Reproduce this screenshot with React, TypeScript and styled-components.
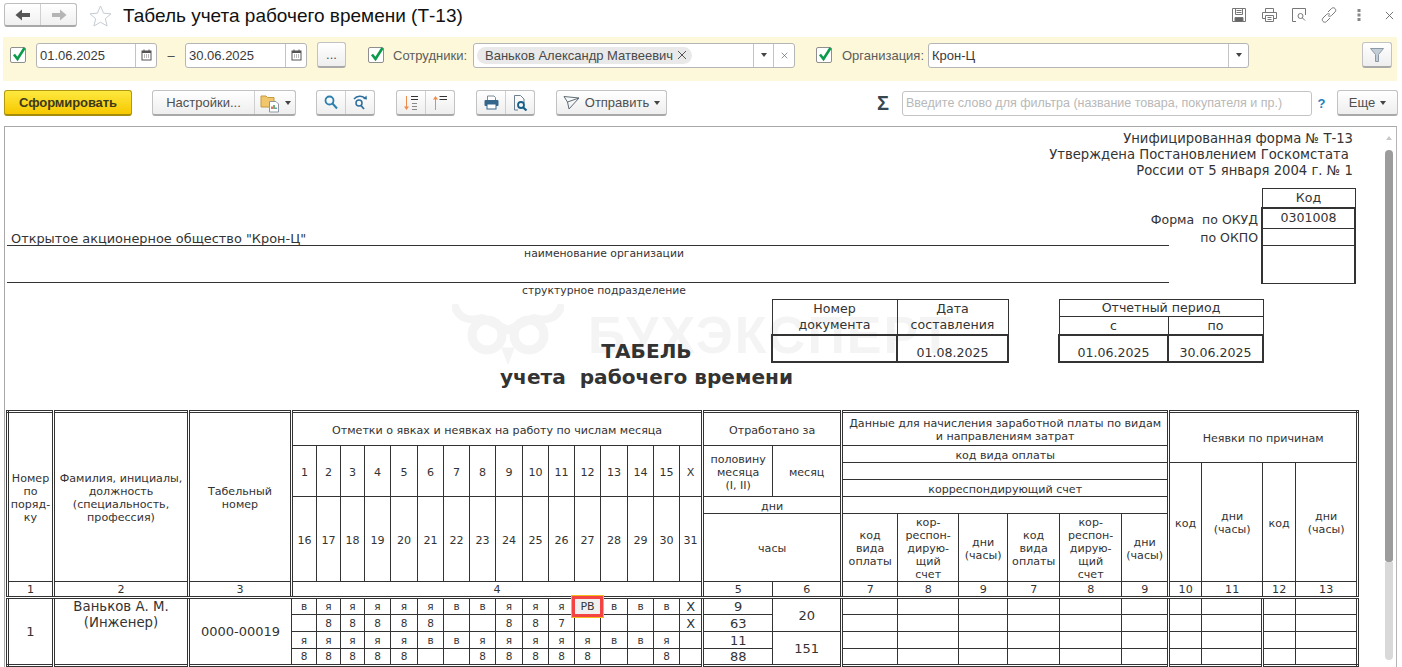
import React from 'react'
import styled, { createGlobalStyle } from 'styled-components'

const GlobalStyle = createGlobalStyle`
  html, body {
    margin: 0;
    padding: 0;
    background: #fff;
    overflow: hidden;
  }
  * {
    box-sizing: border-box;
  }
`

const Page = styled.div`
  width: 1402px;
  height: 667px;
  overflow: hidden;
  display: flex;
  flex-direction: column;
  font-family: 'Liberation Sans', Arial, sans-serif;
  font-size: 13px;
  color: #333;
  background: #fff;
`

/* top title row */
const TitleBar = styled.div`
  height: 37px;
  flex: none;
  display: flex;
  align-items: flex-start;
  padding: 3px 0 0 4px;
`

const NavGroup = styled.div`
  display: flex;
  width: 73px;
  height: 24px;
  border: 1px solid #bdbdbd;
  border-bottom: 2px solid #a8a8a8;
  border-radius: 3px;
  background: linear-gradient(#fff, #f0f0f0);
`

const NavButton = styled.div<{ $divider?: boolean }>`
  flex: 1;
  display: flex;
  align-items: center;
  justify-content: center;
  border-left: ${p => (p.$divider ? '1px solid #d0d0d0' : 'none')};
`

const StarBox = styled.div`
  margin: 2px 0 0 12px;
  width: 23px;
  height: 22px;
`

const Title = styled.h1`
  margin: 1px 0 0 11px;
  font-size: 19px;
  line-height: 24px;
  font-weight: normal;
  color: #111;
  white-space: nowrap;
`

const WindowTools = styled.div`
  margin-left: auto;
  margin-right: -2px;
  display: flex;
  align-items: center;
  height: 22px;
  margin-top: 1px;
`

const WindowTool = styled.div`
  width: 30px;
  display: flex;
  justify-content: center;
`

/* yellow selection band */
const FilterBand = styled.div`
  height: 44px;
  flex: none;
  margin: 0 5px 0 3px;
  background: #fdf8da;
  display: flex;
  align-items: center;
  padding: 0 0 8px 7px;
`

const CheckBox = styled.div<{ $ml?: number }>`
  width: 16px;
  height: 16px;
  flex: none;
  margin-left: ${p => p.$ml ?? 0}px;
  border: 1px solid #8f8f8f;
  border-radius: 2px;
  background: #fff;
  position: relative;
  svg {
    position: absolute;
    left: 0;
    top: -3px;
  }
`

const Field = styled.div<{ $w: number; $ml?: number }>`
  width: ${p => p.$w}px;
  height: 25px;
  flex: none;
  margin-left: ${p => p.$ml ?? 0}px;
  background: #fff;
  border: 1px solid #b5b5b5;
  border-radius: 3px;
  display: flex;
  align-items: center;
  color: #3a3a3a;
`

const FieldText = styled.div`
  flex: 1;
  min-width: 0;
  padding-left: 3px;
  white-space: nowrap;
`

const FieldButton = styled.div<{ $w: number }>`
  width: ${p => p.$w}px;
  height: 100%;
  flex: none;
  border-left: 1px solid #c4c4c4;
  display: flex;
  align-items: center;
  justify-content: center;
  color: #555;
`

const Caret = styled.span`
  width: 0;
  height: 0;
  flex: none;
  border-left: 3px solid transparent;
  border-right: 3px solid transparent;
  border-top: 4px solid #444;
`

const Dash = styled.div`
  width: 28px;
  flex: none;
  text-align: center;
  color: #444;
`

const Label = styled.div<{ $ml: number; $w: number }>`
  margin-left: ${p => p.$ml}px;
  width: ${p => p.$w}px;
  flex: none;
  color: #5c5c5c;
  white-space: nowrap;
`

const Tag = styled.div`
  display: inline-flex;
  vertical-align: middle;
  align-items: center;
  gap: 4px;
  height: 17px;
  margin-left: 0;
  padding: 0 5px 0 8px;
  background: #e9e9e9;
  border-radius: 9px;
  color: #4a4a4a;
  white-space: nowrap;
`

const RaisedButton = styled.div<{ $w: number; $ml?: number }>`
  width: ${p => p.$w}px;
  height: 26px;
  flex: none;
  margin-left: ${p => p.$ml ?? 0}px;
  border: 1px solid #c2c2c2;
  border-bottom: 2px solid #a9a9a9;
  border-radius: 3px;
  background: linear-gradient(#fff, #eee);
  display: flex;
  align-items: center;
  justify-content: center;
  color: #4f4f4f;
  white-space: nowrap;
`

const ButtonPart = styled.div<{ $w?: number; $divider?: boolean }>`
  height: 100%;
  width: ${p => (p.$w ? `${p.$w}px` : 'auto')};
  flex: ${p => (p.$w ? 'none' : 1)};
  border-left: ${p => (p.$divider ? '1px solid #cfcfcf' : 'none')};
  display: flex;
  align-items: center;
  justify-content: center;
  gap: 5px;
`

/* command bar */
const CommandBar = styled.div`
  height: 26px;
  flex: none;
  margin: 9px 5px 0 4px;
  display: flex;
  align-items: center;
`

const MainButton = styled.div`
  width: 128px;
  height: 26px;
  flex: none;
  border: 1px solid #b19a10;
  border-bottom: 2px solid #a48c0c;
  border-radius: 3px;
  background: linear-gradient(#fde93f, #f7c800);
  display: flex;
  align-items: center;
  justify-content: center;
  font-weight: bold;
  font-size: 13px;
  color: #3c3a1c;
  letter-spacing: -0.1px;
`

const SumSign = styled.div`
  margin-left: 210px;
  width: 14px;
  flex: none;
  font-size: 20px;
  font-weight: bold;
  line-height: 20px;
  color: #37474f;
`

const FilterInput = styled.div`
  margin-left: 11px;
  width: 410px;
  height: 25px;
  flex: none;
  border: 1px solid #c4c4c4;
  border-radius: 3px;
  display: flex;
  align-items: center;
  padding-left: 3px;
  color: #b8b8b8;
  font-size: 12.5px;
  white-space: nowrap;
`

const HelpMark = styled.div`
  width: 25px;
  flex: none;
  padding-right: 6px;
  text-align: center;
  color: #1c7fc0;
  font-weight: bold;
`

/* report sheet */
const Sheet = styled.div`
  margin: 10px 5px 0 4px;
  height: 541px;
  flex: none;
  border: 1px solid #a8a8a8;
  border-bottom: none;
  border-right: 1px solid #b5b5b5;
  display: flex;
  overflow: hidden;
`

const Report = styled.div`
  position: relative;
  isolation: isolate;
  flex: 1;
  min-width: 0;
  display: flex;
  flex-direction: column;
  background: #fff;
  font-family: 'DejaVu Sans', Verdana, sans-serif;
  color: #333;
`

const Watermark = styled.div`
  position: absolute;
  left: 447px;
  top: 177px;
  z-index: -1;
  display: flex;
  align-items: center;
  gap: 24px;
  color: #f4f4f4;
  font-family: 'Liberation Sans', Arial, sans-serif;
  font-weight: bold;
  font-size: 52px;
  letter-spacing: 2px;
  line-height: 62px;
  white-space: nowrap;
`

const FormNote = styled.div`
  margin-top: 4px;
  padding-right: 28px;
  text-align: right;
  font-size: 13.2px;
  line-height: 16px;
  height: 57px;
  white-space: pre;
`

const HeadBlock = styled.div`
  display: flex;
  padding-left: 2px;
  height: 112px;
`

const OrgColumn = styled.div`
  width: 1162px;
  flex: none;
`

const OrgLine = styled.div<{ $h: number }>`
  height: ${p => p.$h}px;
  border-bottom: 1px solid #333;
  padding-left: 4px;
  display: flex;
  align-items: flex-end;
  font-size: 12.9px;
  line-height: 13px;
`

const OrgCaption = styled.div`
  height: 16px;
  padding-top: 1px;
  text-align: center;
  font-size: 10.8px;
  line-height: 14px;
  padding-left: 32px;
`

const CodeLabels = styled.div`
  width: 89px;
  flex: none;
  padding-top: 23px;
  display: flex;
  flex-direction: column;
  align-items: flex-end;
  font-size: 12.5px;
  line-height: 18px;
  white-space: pre;
`

const SmallTable = styled.table<{ $w: number; $ml?: number }>`
  width: ${p => p.$w}px;
  flex: none;
  margin-left: ${p => p.$ml ?? 0}px;
  border-collapse: collapse;
  table-layout: fixed;
  font-size: 12.6px;
  align-self: flex-start;
`

const SmallCell = styled.td<{ $h: number; $thick?: boolean; $thickTop?: boolean }>`
  height: ${p => p.$h}px;
  padding: 0;
  text-align: center;
  vertical-align: ${p => (p.$thick ? 'bottom' : 'middle')};
  border: ${p => (p.$thick ? '2px' : '1px')} solid #333;
  border-top-width: ${p => (p.$thick || p.$thickTop ? 2 : 1)}px;
  line-height: 16px;
`

const CodeCell = styled(SmallCell)`
  border-left-width: 2px;
  border-right-width: 2px;
`

const DocRow = styled.div`
  display: flex;
  height: 112px;
  align-items: flex-start;
`

const TitleBlock = styled.div`
  width: 249px;
  margin-left: 517px;
  flex: none;
  padding-top: 39px;
  display: flex;
  flex-direction: column;
  align-items: center;
  font-weight: bold;
  font-size: 20.1px;
  line-height: 26px;
  white-space: pre;
`

const TableWrap = styled.div`
  padding-left: 1px;
`

const MainTable = styled.table`
  width: 1350px;
  table-layout: fixed;
  border-collapse: collapse;
  border: 3px double #333;
  font-size: 11.1px;
`

const Row = styled.tr<{ $h: number }>`
  height: ${p => p.$h}px;
`

const Cell = styled.td<{
  $left?: boolean
  $under?: boolean
  $size?: number
  $top?: boolean
}>`
  padding: 0;
  text-align: center;
  vertical-align: ${p => (p.$top ? 'top' : 'middle')};
  border: 1px solid #333;
  border-left: ${p => (p.$left ? '3px double #333' : '1px solid #333')};
  border-bottom: ${p => (p.$under ? '3px double #333' : '1px solid #333')};
  font-size: ${p => p.$size ?? 11.1}px;
  line-height: 13px;
  overflow: visible;
`

const HeaderCell = styled(Cell)`
  padding-top: 2px;
`

const PersonName = styled.div`
  line-height: 16px;
`

const SelectedCell = styled(Cell)`
  position: relative;
`

const Selection = styled.div`
  position: absolute;
  inset: -3px -3px -3px -3px;
  border: 3px solid #f44343;
  outline: 1px solid #f5bb1c;
  background: #f0f0f0;
  display: flex;
  align-items: center;
  justify-content: center;
  font-size: 11px;
`

/* scroll bar */
const ScrollBar = styled.div`
  width: 15px;
  flex: none;
  display: flex;
  flex-direction: column;
  align-items: center;
  padding: 9px 3px 0 4px;
`

const ScrollUp = styled.div`
  width: 0;
  height: 0;
  border-left: 3px solid transparent;
  border-right: 3px solid transparent;
  border-bottom: 4px solid #c8c8c8;
  margin-bottom: 10px;
`

const ScrollThumb = styled.div`
  width: 8px;
  height: 412px;
  flex: none;
  border-radius: 4px 4px 3px 3px;
  background: #9c9c9c;
`

const ScrollRest = styled.div`
  width: 8px;
  height: 98px;
  flex: none;
  border-radius: 0 0 4px 4px;
  background: #d9d9d9;
`

const Check = () => (
  <svg width="16" height="18" viewBox="0 0 16 18">
    <path d="M3 9.5 L6.5 14 L13.5 3" fill="none" stroke="#0b9b4a" strokeWidth="2.6" />
  </svg>
)

const Calendar = () => (
  <svg width="11" height="12" viewBox="0 0 11 12">
    <rect x="1" y="2" width="9" height="9" fill="none" stroke="#555" />
    <rect x="1" y="2" width="9" height="2" fill="#555" />
    <path d="M3 0.5V3M8 0.5V3" stroke="#555" />
    <path d="M3 6h1M5 6h1M7 6h1M3 8h1M5 8h1M7 8h1" stroke="#777" />
  </svg>
)

const ArrowBack = ({ color }: { color: string }) => (
  <svg width="16" height="12" viewBox="0 0 16 12">
    <path d="M0.5 6 L7 0.5 V4 H15 V8 H7 V11.5 Z" fill={color} />
  </svg>
)

const ArrowNext = ({ color }: { color: string }) => (
  <svg width="16" height="12" viewBox="0 0 16 12">
    <path d="M15.5 6 L9 0.5 V4 H1 V8 H9 V11.5 Z" fill={color} />
  </svg>
)

const Star = () => (
  <svg width="23" height="22" viewBox="0 0 23 22">
    <path
      d="M11.5 1 L14.6 8.2 L22 8.8 L16.3 13.7 L18.1 21 L11.5 17.2 L4.9 21 L6.7 13.7 L1 8.8 L8.4 8.2 Z"
      fill="#fff"
      stroke="#c6ccd2"
    />
  </svg>
)

const SaveIcon = () => (
  <svg width="16" height="16" viewBox="0 0 16 16" fill="none" stroke="#777">
    <path d="M1.5 1.5H14.5V14.5H1.5Z" />
    <path d="M4.5 1.5V7.5H11.5V1.5M5.5 3.5H10.5M5.5 5.5H10.5" />
    <path d="M4 14.5V10.5H12V14.5" fill="#666" />
  </svg>
)

const PrintIcon = () => (
  <svg width="17" height="16" viewBox="0 0 17 16" fill="none" stroke="#777">
    <path d="M4.5 5.5V1.5H12.5V5.5" />
    <path d="M4.5 11.5H1.5V5.5H15.5V11.5H12.5" />
    <path d="M4.5 8.5H12.5V14.5H4.5Z" />
    <path d="M6.5 10.5H10.5M6.5 12.5H10.5" />
  </svg>
)

const PreviewIcon = () => (
  <svg width="16" height="16" viewBox="0 0 16 16" fill="none" stroke="#777">
    <path d="M5 14.5H1.5V1.5H14.5V8" />
    <circle cx="9.5" cy="9" r="2.5" />
    <path d="M11.5 11L14 13.5" />
  </svg>
)

const LinkIcon = () => (
  <svg width="16" height="16" viewBox="0 0 16 16" fill="none" stroke="#777">
    <path d="M7 5L10.5 1.5C11.5 .5 13 .5 14 1.5S15 4 14 5L10.5 8.5C9.5 9.5 8 9.5 7 8.5" />
    <path d="M9 11L5.5 14.5C4.5 15.5 3 15.5 2 14.5S1 12 2 11L5.5 7.5C6.5 6.5 8 6.5 9 7.5" />
  </svg>
)

const DotsIcon = () => (
  <svg width="4" height="14" viewBox="0 0 4 14" fill="#888">
    <rect x="0.5" y="1" width="3" height="3" />
    <rect x="0.5" y="5.5" width="3" height="3" />
    <rect x="0.5" y="10" width="3" height="3" />
  </svg>
)

const CloseMark = ({ size, color }: { size: number; color: string }) => (
  <svg width={size} height={size} viewBox="0 0 10 10" stroke={color} fill="none">
    <path d="M1 1L9 9M9 1L1 9" />
  </svg>
)

const FunnelIcon = () => (
  <svg width="14" height="14" viewBox="0 0 14 14">
    <path d="M0.5 0.5H13.5L8.5 6.5V13.5H5.5V6.5Z" fill="#c3cdd6" stroke="#8b99a6" />
  </svg>
)

const SettingsIcon = () => (
  <svg width="20" height="20" viewBox="0 0 20 20">
    <path d="M1 3H6L7.5 4.5H14V14H1Z" fill="#f2c66b" stroke="#c49a3f" />
    <path d="M9.5 8.5H16L18.5 11V19H9.5Z" fill="#fff" stroke="#8c97a3" />
    <path d="M12 16V13.5" stroke="#d04a3a" strokeWidth="1.5" />
    <path d="M14 16V12" stroke="#3d9a50" strokeWidth="1.5" />
    <path d="M16 16V14.5" stroke="#3a78b0" strokeWidth="1.5" />
  </svg>
)

const SearchIcon = () => (
  <svg width="14" height="15" viewBox="0 0 14 15" fill="none" stroke="#2c7fb0" strokeWidth="1.8">
    <circle cx="5.5" cy="5.5" r="4" />
    <path d="M8.5 8.5L13 13.5" strokeWidth="2" />
  </svg>
)

const SearchAgainIcon = () => (
  <svg width="15" height="15" viewBox="0 0 15 15" fill="none" stroke="#2c6f9e" strokeWidth="1.5">
    <path d="M1 4C4 0.5 9 0.5 12 3" />
    <path d="M10 4L14 4.5L13.5 0.5" fill="#2c6f9e" stroke="none" />
    <circle cx="6" cy="8" r="3" />
    <path d="M8 10.5L11 14" strokeWidth="1.8" />
  </svg>
)

const SortDownIcon = () => (
  <svg width="16" height="16" viewBox="0 0 16 16" fill="none">
    <path d="M3.5 1V13" stroke="#ee8a4a" />
    <path d="M1 11.5H6L3.5 15Z" fill="#ee8a4a" />
    <path d="M8 1.5H15M8 4.5H15" stroke="#333" />
    <path d="M9 8.5H14M9 11.5H14M9 14.5H14" stroke="#888" />
  </svg>
)

const SortUpIcon = () => (
  <svg width="16" height="16" viewBox="0 0 16 16" fill="none">
    <path d="M3.5 3V15" stroke="#ee8a4a" />
    <path d="M1 4.5H6L3.5 1Z" fill="#ee8a4a" />
    <path d="M7.5 1.5H15M7.5 4.5H15" stroke="#333" />
  </svg>
)

const PrinterColorIcon = () => (
  <svg width="15" height="15" viewBox="0 0 15 15">
    <path d="M3.5 5V1H10L11.5 2.5V5" fill="#fff" stroke="#7b8a96" />
    <rect x="0.5" y="5" width="14" height="6" rx="1" fill="#35678c" />
    <rect x="3" y="9" width="9" height="5" fill="#fff" stroke="#35678c" />
  </svg>
)

const DocSearchIcon = () => (
  <svg width="15" height="16" viewBox="0 0 15 16" fill="none">
    <path d="M1.5 15V.5H7.5L11 4V8" stroke="#6d7f8e" />
    <path d="M1.5 15H5" stroke="#6d7f8e" />
    <circle cx="8" cy="10" r="3" stroke="#175f8a" strokeWidth="1.8" />
    <path d="M10 12.2L13.5 15.5" stroke="#175f8a" strokeWidth="2.2" />
  </svg>
)

const SendIcon = () => (
  <svg width="17" height="15" viewBox="0 0 17 15" fill="none" stroke="#5f6d76">
    <path d="M1 1.5L16 3L6 14L4.5 7Z" />
    <path d="M4.5 7L16 3" />
  </svg>
)

const OwlMark = () => (
  <svg width="112" height="62" viewBox="0 0 112 62" fill="none" stroke="#f4f4f4">
    <circle cx="35" cy="31" r="15" strokeWidth="9" />
    <circle cx="77" cy="31" r="15" strokeWidth="9" />
    <path d="M2 0C6 14 16 18 30 14L56 26L82 14C96 18 106 14 110 0" strokeWidth="8" />
    <path d="M50 44L56 60L62 44Z" fill="#f4f4f4" />
  </svg>
)

const firstHalf = ['1', '2', '3', '4', '5', '6', '7', '8', '9', '10', '11', '12', '13', '14', '15', 'Х']
const secondHalf = ['16', '17', '18', '19', '20', '21', '22', '23', '24', '25', '26', '27', '28', '29', '30', '31']

const marks = [
  ['в', 'я', 'я', 'я', 'я', 'я', 'в', 'в', 'я', 'я', 'я', 'РВ', 'в', 'в', 'в', 'Х'],
  ['', '8', '8', '8', '8', '8', '', '', '8', '8', '7', '', '', '', '', 'Х'],
  ['я', 'я', 'я', 'я', 'я', 'в', 'в', 'я', 'я', 'я', 'я', 'я', 'в', 'в', 'я', ''],
  ['8', '8', '8', '8', '8', '', '', '8', '8', '8', '8', '8', '', '', '8', '']
]

const hours = ['9', '63', '11', '88']
const months = ['20', '', '151', '']

const dayWidths = [25, 24, 24, 26, 27, 26, 26, 26, 27, 26, 26, 26, 27, 26, 26, 23]
const payWidths = [56, 61, 49, 52, 62, 47]

const renderMark = (mark: string, key: number) => {
  if (mark === 'РВ') {
    return (
      <SelectedCell key={key}>
        <Selection>РВ</Selection>
      </SelectedCell>
    )
  }
  return (
    <Cell key={key} $size={mark === 'Х' ? 13 : 10.5}>
      {mark}
    </Cell>
  )
}

const App: React.FC = () => {
  return (
    <Page>
      <GlobalStyle />
      <TitleBar>
        <NavGroup>
          <NavButton>
            <ArrowBack color="#555" />
          </NavButton>
          <NavButton $divider>
            <ArrowNext color="#b5b5b5" />
          </NavButton>
        </NavGroup>
        <StarBox>
          <Star />
        </StarBox>
        <Title>Табель учета рабочего времени (Т-13)</Title>
        <WindowTools>
          <WindowTool><SaveIcon /></WindowTool>
          <WindowTool><PrintIcon /></WindowTool>
          <WindowTool><PreviewIcon /></WindowTool>
          <WindowTool><LinkIcon /></WindowTool>
          <WindowTool><DotsIcon /></WindowTool>
          <WindowTool><CloseMark size={9} color="#666" /></WindowTool>
        </WindowTools>
      </TitleBar>

      <FilterBand>
        <CheckBox><Check /></CheckBox>
        <Field $w={121} $ml={10}>
          <FieldText>01.06.2025</FieldText>
          <FieldButton $w={21}><Calendar /></FieldButton>
        </Field>
        <Dash>–</Dash>
        <Field $w={122}>
          <FieldText>30.06.2025</FieldText>
          <FieldButton $w={21}><Calendar /></FieldButton>
        </Field>
        <RaisedButton $w={29} $ml={10}>...</RaisedButton>
        <CheckBox $ml={22}><Check /></CheckBox>
        <Label $ml={9} $w={80}>Сотрудники:</Label>
        <Field $w={322}>
          <FieldText>
            <Tag>
              Ваньков Александр Матвеевич
              <CloseMark size={10} color="#555" />
            </Tag>
          </FieldText>
          <FieldButton $w={20}><Caret /></FieldButton>
          <FieldButton $w={21}><CloseMark size={7} color="#666" /></FieldButton>
        </Field>
        <CheckBox $ml={21}><Check /></CheckBox>
        <Label $ml={10} $w={86}>Организация:</Label>
        <Field $w={321}>
          <FieldText>Крон-Ц</FieldText>
          <FieldButton $w={20}><Caret /></FieldButton>
        </Field>
        <RaisedButton $w={30} $ml={113}><FunnelIcon /></RaisedButton>
      </FilterBand>

      <CommandBar>
        <MainButton>Сформировать</MainButton>
        <RaisedButton $w={144} $ml={20}>
          <ButtonPart>Настройки...</ButtonPart>
          <ButtonPart $w={41} $divider>
            <SettingsIcon />
            <Caret />
          </ButtonPart>
        </RaisedButton>
        <RaisedButton $w={59} $ml={20}>
          <ButtonPart><SearchIcon /></ButtonPart>
          <ButtonPart $divider><SearchAgainIcon /></ButtonPart>
        </RaisedButton>
        <RaisedButton $w={59} $ml={21}>
          <ButtonPart><SortDownIcon /></ButtonPart>
          <ButtonPart $divider><SortUpIcon /></ButtonPart>
        </RaisedButton>
        <RaisedButton $w={59} $ml={21}>
          <ButtonPart><PrinterColorIcon /></ButtonPart>
          <ButtonPart $divider><DocSearchIcon /></ButtonPart>
        </RaisedButton>
        <RaisedButton $w={111} $ml={21}>
          <ButtonPart>
            <SendIcon />
            Отправить
            <Caret />
          </ButtonPart>
        </RaisedButton>
        <SumSign>Σ</SumSign>
        <FilterInput>Введите слово для фильтра (название товара, покупателя и пр.)</FilterInput>
        <HelpMark>?</HelpMark>
        <RaisedButton $w={61}>
          <ButtonPart>
            Еще
            <Caret />
          </ButtonPart>
        </RaisedButton>
      </CommandBar>

      <Sheet>
        <Report>
          <Watermark>
            <OwlMark />
            БУХЭКСПЕРТ
          </Watermark>

          <FormNote>
            Унифицированная форма № Т-13{'\n'}
            Утверждена Постановлением Госкомстата {'\n'}
            России от 5 января 2004 г. № 1
          </FormNote>

          <HeadBlock>
            <OrgColumn>
              <OrgLine $h={58}>Открытое акционерное общество "Крон-Ц"</OrgLine>
              <OrgCaption>наименование организации</OrgCaption>
              <OrgLine $h={21} />
              <OrgCaption>структурное подразделение</OrgCaption>
            </OrgColumn>
            <CodeLabels>
              <div>{'Форма  по ОКУД'}</div>
              <div>по ОКПО</div>
            </CodeLabels>
            <SmallTable $w={95} $ml={3}>
              <tbody>
                <tr><SmallCell $h={20}>Код</SmallCell></tr>
                <tr><CodeCell $h={20} $thickTop>0301008</CodeCell></tr>
                <tr><CodeCell $h={17} /></tr>
                <tr><CodeCell $h={38} /></tr>
              </tbody>
            </SmallTable>
          </HeadBlock>

          <DocRow>
            <TitleBlock>
              <span>ТАБЕЛЬ</span>
              <span>учета  рабочего времени</span>
            </TitleBlock>
            <SmallTable $w={236}>
              <colgroup>
                <col width={125} />
                <col width={111} />
              </colgroup>
              <tbody>
                <tr>
                  <SmallCell $h={36}>Номер<br />документа</SmallCell>
                  <SmallCell $h={36}>Дата<br />составления</SmallCell>
                </tr>
                <tr>
                  <SmallCell $h={27} $thick />
                  <SmallCell $h={27} $thick>01.08.2025</SmallCell>
                </tr>
              </tbody>
            </SmallTable>
            <SmallTable $w={204} $ml={49}>
              <colgroup>
                <col width={109} />
                <col width={95} />
              </colgroup>
              <tbody>
                <tr><SmallCell $h={17} colSpan={2}>Отчетный период</SmallCell></tr>
                <tr>
                  <SmallCell $h={19}>с</SmallCell>
                  <SmallCell $h={19}>по</SmallCell>
                </tr>
                <tr>
                  <SmallCell $h={27} $thick>01.06.2025</SmallCell>
                  <SmallCell $h={27} $thick>30.06.2025</SmallCell>
                </tr>
              </tbody>
            </SmallTable>
          </DocRow>

          <TableWrap>
            <MainTable>
              <colgroup>
                <col width={46} />
                <col width={135} />
                <col width={103} />
                {dayWidths.map((w, i) => <col key={i} width={w} />)}
                <col width={70} />
                <col width={69} />
                {payWidths.map((w, i) => <col key={i} width={w} />)}
                <col width={33} />
                <col width={61} />
                <col width={33} />
                <col width={62} />
              </colgroup>
              <tbody>
                <Row $h={34}>
                  <HeaderCell rowSpan={6}>Номер<br />по<br />поряд-<br />ку</HeaderCell>
                  <HeaderCell rowSpan={6} $left>Фамилия, инициалы,<br />должность<br />(специальность,<br />профессия)</HeaderCell>
                  <HeaderCell rowSpan={6} $left>Табельный<br />номер</HeaderCell>
                  <HeaderCell colSpan={16} $left>Отметки о явках и неявках на работу по числам месяца</HeaderCell>
                  <HeaderCell colSpan={2} $left>Отработано за</HeaderCell>
                  <HeaderCell colSpan={6} $left>Данные для начисления заработной платы по видам<br />и направлениям затрат</HeaderCell>
                  <HeaderCell colSpan={4} rowSpan={2} $left>Неявки по причинам</HeaderCell>
                </Row>
                <Row $h={17}>
                  {firstHalf.map((d, i) => (
                    <HeaderCell key={i} rowSpan={3} $left={i === 0}>{d}</HeaderCell>
                  ))}
                  <HeaderCell rowSpan={3} $left>половину<br />месяца<br />(I, II)</HeaderCell>
                  <HeaderCell rowSpan={3}>месяц</HeaderCell>
                  <HeaderCell colSpan={6} $left>код вида оплаты</HeaderCell>
                </Row>
                <Row $h={17}>
                  <HeaderCell colSpan={6} $left />
                  <HeaderCell rowSpan={4} $left>код</HeaderCell>
                  <HeaderCell rowSpan={4}>дни<br />(часы)</HeaderCell>
                  <HeaderCell rowSpan={4}>код</HeaderCell>
                  <HeaderCell rowSpan={4}>дни<br />(часы)</HeaderCell>
                </Row>
                <Row $h={17}>
                  <HeaderCell colSpan={6} $left>корреспондирующий счет</HeaderCell>
                </Row>
                <Row $h={17}>
                  {secondHalf.map((d, i) => (
                    <HeaderCell key={i} rowSpan={2} $left={i === 0}>{d}</HeaderCell>
                  ))}
                  <HeaderCell colSpan={2} $left>дни</HeaderCell>
                  <HeaderCell colSpan={6} $left />
                </Row>
                <Row $h={67}>
                  <HeaderCell colSpan={2} $left>часы</HeaderCell>
                  <HeaderCell $left>код<br />вида<br />оплаты</HeaderCell>
                  <HeaderCell>кор-<br />респон-<br />дирую-<br />щий<br />счет</HeaderCell>
                  <HeaderCell>дни<br />(часы)</HeaderCell>
                  <HeaderCell>код<br />вида<br />оплаты</HeaderCell>
                  <HeaderCell>кор-<br />респон-<br />дирую-<br />щий<br />счет</HeaderCell>
                  <HeaderCell>дни<br />(часы)</HeaderCell>
                </Row>
                <Row $h={16}>
                  <Cell $under>1</Cell>
                  <Cell $under $left>2</Cell>
                  <Cell $under $left>3</Cell>
                  <Cell $under $left colSpan={16}>4</Cell>
                  <Cell $under $left>5</Cell>
                  <Cell $under>6</Cell>
                  <Cell $under $left>7</Cell>
                  <Cell $under>8</Cell>
                  <Cell $under>9</Cell>
                  <Cell $under>7</Cell>
                  <Cell $under>8</Cell>
                  <Cell $under>9</Cell>
                  <Cell $under $left>10</Cell>
                  <Cell $under>11</Cell>
                  <Cell $under>12</Cell>
                  <Cell $under>13</Cell>
                </Row>
                {marks.map((line, r) => (
                  <Row $h={17} key={r}>
                    {r === 0 && (
                      <>
                        <Cell rowSpan={4} $size={13}>1</Cell>
                        <Cell rowSpan={4} $left $top $size={13.3}>
                          <PersonName>Ваньков А. М.<br />(Инженер)</PersonName>
                        </Cell>
                        <Cell rowSpan={4} $left $size={13}>0000-00019</Cell>
                      </>
                    )}
                    {line.map((m, i) => renderMark(m, i))}
                    <Cell $left $size={13}>{hours[r]}</Cell>
                    {months[r] && <Cell rowSpan={2} $size={13}>{months[r]}</Cell>}
                    <Cell $left />
                    <Cell />
                    <Cell />
                    <Cell />
                    <Cell />
                    <Cell />
                    <Cell $left />
                    <Cell />
                    <Cell $left />
                    <Cell />
                  </Row>
                ))}
              </tbody>
            </MainTable>
          </TableWrap>
        </Report>
        <ScrollBar>
          <ScrollUp />
          <ScrollThumb />
          <ScrollRest />
        </ScrollBar>
      </Sheet>
    </Page>
  )
}

export default App
